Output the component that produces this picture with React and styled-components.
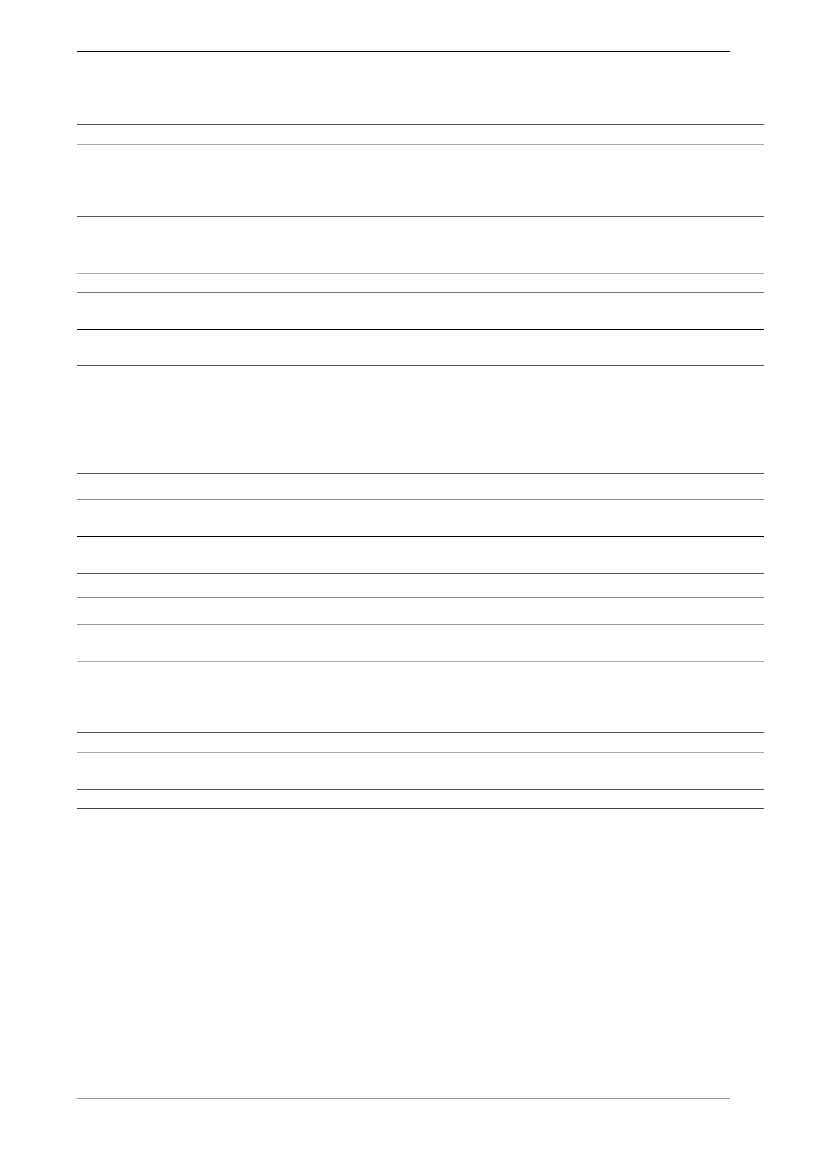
import React from "react";
import styled, { createGlobalStyle } from "styled-components";

const rows = [
  { top: "#555", h: 20 },
  { top: "#aaa", h: 72 },
  { top: "#555", h: 57 },
  { top: "#aaa", h: 19 },
  { top: "#777", h: 37 },
  { top: "#000", h: 36 },
  { top: "#555", h: 108 },
  { top: "#555", h: 26 },
  { top: "#888", h: 37 },
  { top: "#000", h: 37 },
  { top: "#555", h: 24 },
  { top: "#888", h: 27 },
  { top: "#999", h: 37 },
  { top: "#aaa", h: 71 },
  { top: "#555", h: 20 },
  { top: "#aaa", h: 37 },
  { top: "#555", h: 19 },
];

function App() {
  return (
    <>
      <GlobalStyle />
      <Page>
        <Header />
        <Table>
          {rows.map((r, i) => (
            <Row key={i} $top={r.top} $h={r.h} $last={i === rows.length - 1}>
              <Cell />
              <Cell />
            </Row>
          ))}
        </Table>
        <Spacer />
        <Footer />
      </Page>
    </>
  );
}

export default App;

const GlobalStyle = createGlobalStyle`
  html, body {
    margin: 0;
    padding: 0;
    background: #fff;
    overflow: hidden;
    scrollbar-width: none;
    font-family: "Liberation Sans", Arial, sans-serif;
  }
  ::-webkit-scrollbar {
    display: none;
    width: 0;
  }
`;

const Page = styled.div`
  padding-left: 77px;
  display: flex;
  flex-direction: column;
`;

const Header = styled.div`
  width: 653px;
  height: 52px;
  border-bottom: 1px solid #000;
  box-sizing: border-box;
  margin-bottom: 72px;
`;

const Table = styled.div`
  width: 687px;
  display: flex;
  flex-direction: column;
`;

const Row = styled.div`
  display: grid;
  grid-template-columns: 188px 1fr;
  height: ${(p) => p.$h + (p.$last ? 1 : 0)}px;
  box-sizing: border-box;
  border-top: 1px solid ${(p) => p.$top};
  border-bottom: ${(p) => (p.$last ? "1px solid #444" : "none")};
`;

const Cell = styled.div`
  & + & {
    border-left: 1px solid transparent;
  }
`;

const Spacer = styled.div`
  height: 289px;
`;

const Footer = styled.div`
  width: 653px;
  border-top: 1px solid #999;
`;
